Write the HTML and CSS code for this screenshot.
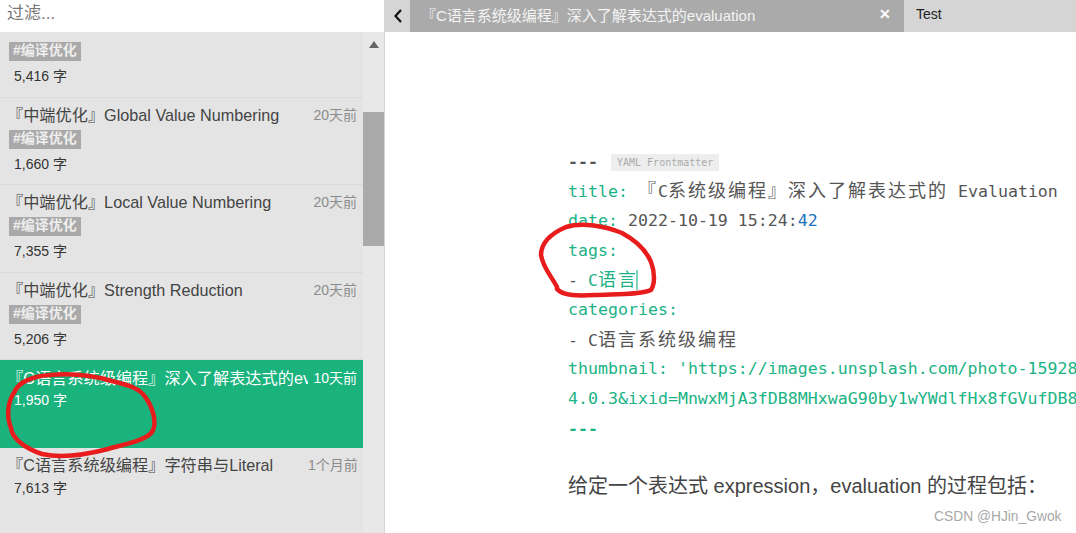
FILE: index.html
```html
<!DOCTYPE html>
<html lang="zh">
<head>
<meta charset="utf-8">
<title>Typora</title>
<link rel="stylesheet" href="styles.css">
</head>
<body>
<div class="app">
  <aside class="sidebar">
    <div class="filter">过滤...</div>
    <div class="list-wrap">
      <div class="list">
        <div class="item item-partial">
          <span class="tag">#编译优化</span>
          <div class="count">5,416 字</div>
        </div>
        <div class="item">
          <div class="head"><div class="name"><span class="lq">『</span>中端优化』Global Value Numbering</div><div class="when">20天前</div></div>
          <span class="tag">#编译优化</span>
          <div class="count">1,660 字</div>
        </div>
        <div class="item">
          <div class="head"><div class="name"><span class="lq">『</span>中端优化』Local Value Numbering</div><div class="when">20天前</div></div>
          <span class="tag">#编译优化</span>
          <div class="count">7,355 字</div>
        </div>
        <div class="item">
          <div class="head"><div class="name"><span class="lq">『</span>中端优化』Strength Reduction</div><div class="when">20天前</div></div>
          <span class="tag">#编译优化</span>
          <div class="count">5,206 字</div>
        </div>
        <div class="item selected">
          <div class="head"><div class="name"><span class="lq">『</span>C语言系统级编程』深入了解表达式的evaluation</div><div class="when">10天前</div></div>
          <div class="count">1,950 字</div>
        </div>
        <div class="item last">
          <div class="head"><div class="name"><span class="lq">『</span>C语言系统级编程』字符串与Literal</div><div class="when">1个月前</div></div>
          <div class="count">7,613 字</div>
        </div>
      </div>
      <div class="scrollbar">
        <div class="arrow"></div>
        <div class="thumb"></div>
      </div>
    </div>
  </aside>
  <main class="main">
    <nav class="tabs">
      <div class="back">
        <svg width="12" height="16" viewBox="0 0 12 16"><path d="M9 2 L3.5 8 L9 14" fill="none" stroke="#111" stroke-width="2.2"/></svg>
      </div>
      <div class="tab active"><span><span class="lq">『</span>C语言系统级编程』深入了解表达式的evaluation</span><span class="close">✕</span></div>
      <div class="tab">Test</div>
    </nav>
    <section class="editor">
      <div class="code">
        <div class="line"><span class="rule">---</span><span class="badge">YAML Frontmatter</span></div>
        <div class="line"><span class="key">title:</span> <span class="cjk">『</span>C<span class="cjk">系统级编程』深入了解表达式的</span> Evaluation</div>
        <div class="line"><span class="key">date:</span> 2022-10-19 15:24:<span class="num">42</span></div>
        <div class="line"><span class="key">tags:</span></div>
        <div class="line">- <span class="key">C<span class="cjk">语言</span></span><span class="caret"></span></div>
        <div class="line"><span class="key">categories:</span></div>
        <div class="line">- C<span class="cjk">语言系统级编程</span></div>
        <div class="line key"><span>thumbnail:</span> 'https://images.unsplash.com/photo-1592840496694-26d035b52b48?crop=entropy</div>
        <div class="line key">4.0.3&amp;ixid=MnwxMjA3fDB8MHxwaG90by1wYWdlfHx8fGVufDB8fHx8&amp;auto=format</div>
        <div class="line"><span class="rule-end">---</span></div>
      </div>
      <p class="para">给定一个表达式 expression，evaluation 的过程包括：</p>
    </section>
  </main>
  <svg class="scribbles" width="1076" height="533" viewBox="0 0 1076 533">
    <path d="M13 394 C7 405 7 418 11 428 C12 438 24 448 42 454 C60 458 85 455 108 449 C125 444 145 441 152 432 C157 424 154 410 146 398 C140 388 128 385 112 381 C95 376 72 373 50 375 C35 376 18 381 14 393" />
    <path d="M557 287 C552 277 543 268 541 255 C541 243 550 234 566 227 C582 222 605 226 622 233 C635 240 646 250 651 262 C655 272 655 284 651 290 C640 295 615 294 595 295 C578 296 563 296 557 289" />
  </svg>
  <div class="watermark">CSDN @HJin_Gwok</div>
</div>
</body>
</html>
```
FILE: styles.css
```css
* { box-sizing: border-box; }
html, body { margin: 0; padding: 0; height: 100%; overflow: hidden; background: #fff; }
body { font-family: "Liberation Sans", "Noto Sans CJK SC", sans-serif; }

.app { display: flex; width: 1076px; height: 533px; position: relative; overflow: hidden; }

.sidebar { width: 385px; flex: none; display: flex; flex-direction: column; border-right: 1px solid #d4d4d4; }
.filter { height: 32px; flex: none; padding: 4px 0 0 7px; font-size: 17px; line-height: 20px; color: #777; background: #fff; }
.list-wrap { flex: 1; display: flex; min-height: 0; background: #e4e4e4; }
.list { width: 363px; flex: none; overflow: hidden; }

.item { height: 87.5px; padding: 6px 6px 0 14px; border-bottom: 1px solid #dadada; color: #444; }
.item-partial { height: 65.5px; padding-top: 7px; }
.item.selected { background: #1ab37d; color: #fff; border-bottom: 0; padding-top: 7px; }
.item.last { border-bottom: 0; padding-top: 6px; }

.head { display: flex; align-items: center; height: 23px; }
.name { width: 301px; flex: none; margin-left: -7px; padding-left: 7px; font-size: 16.2px; line-height: 23px; white-space: nowrap; overflow: hidden; }
.when { flex: 1; text-align: right; font-size: 14px; line-height: 23px; white-space: nowrap; color: #8c8c8c; }
.selected .when { color: #fff; }
.lq { margin-left: -7px; }
.tab .lq { margin-left: -6px; }

.tag { display: block; width: 72px; height: 19px; margin: 3px 0 0 -5px; background: #a9a9a9; color: #eee; font-size: 14px; font-weight: bold; line-height: 16px; padding-left: 4px; white-space: nowrap; }
.count { margin-top: 5px; font-size: 14px; line-height: 20px; color: #333; }
.item.selected .count { color: #fff; margin-top: 0; }
.item.last .count { margin-top: 1px; }

.scrollbar { width: 21px; flex: none; background: #e8e8e8; position: relative; }
.arrow { width: 0; height: 0; margin: 9px auto 0; border-left: 5px solid transparent; border-right: 5px solid transparent; border-bottom: 7px solid #666; }
.thumb { height: 134px; margin-top: 64px; background: #aaa; }

.main { flex: 1; min-width: 0; display: flex; flex-direction: column; }
.tabs { height: 32px; flex: none; display: flex; background: #d5d5d5; }
.back { width: 25px; flex: none; display: flex; align-items: center; justify-content: center; }
.tab { display: flex; align-items: center; padding: 0 13px 4px 12px; font-size: 14px; color: #222; }
.tab.active { width: 494px; justify-content: space-between; padding: 0 13px 4px 17px; background: #aaa; color: #f4f4f4; font-size: 15px; white-space: nowrap; }
.close { font-size: 14px; font-weight: bold; color: #fff; }

.editor { flex: 1; padding: 114.5px 0 0 183px; overflow: hidden; color: #555; }
.code { font-family: "DejaVu Sans Mono", "Noto Sans CJK SC", monospace; font-size: 16.6px; }
.line { height: 29.7px; line-height: 29.7px; white-space: nowrap; }
.key { color: #1ab385; }
.num { color: #1a73c0; }
.rule { color: #555; font-weight: bold; }
.rule-end { color: #1ab385; font-weight: bold; }
.cjk { font-size: 18px; letter-spacing: 2px; }
.badge { display: inline-block; margin-left: 13px; padding: 0 6px; height: 17px; line-height: 17px; font-size: 10px; color: #aaa; background: #eee; vertical-align: 1px; }
.caret { display: inline-block; width: 2px; height: 20px; background: #7fd4b8; vertical-align: -4px; margin-left: -2px; }

.para { margin: 28px 0 0; font-size: 20px; line-height: 30px; color: #444; white-space: nowrap; }

.scribbles { position: absolute; left: 0; top: 0; pointer-events: none; }
.scribbles path { fill: none; stroke: #e81c1c; stroke-width: 4.5; stroke-linecap: round; stroke-linejoin: round; }

.watermark { position: absolute; left: 934px; top: 509px; font-size: 13.8px; line-height: 16px; color: #a8a8a8; }
```
